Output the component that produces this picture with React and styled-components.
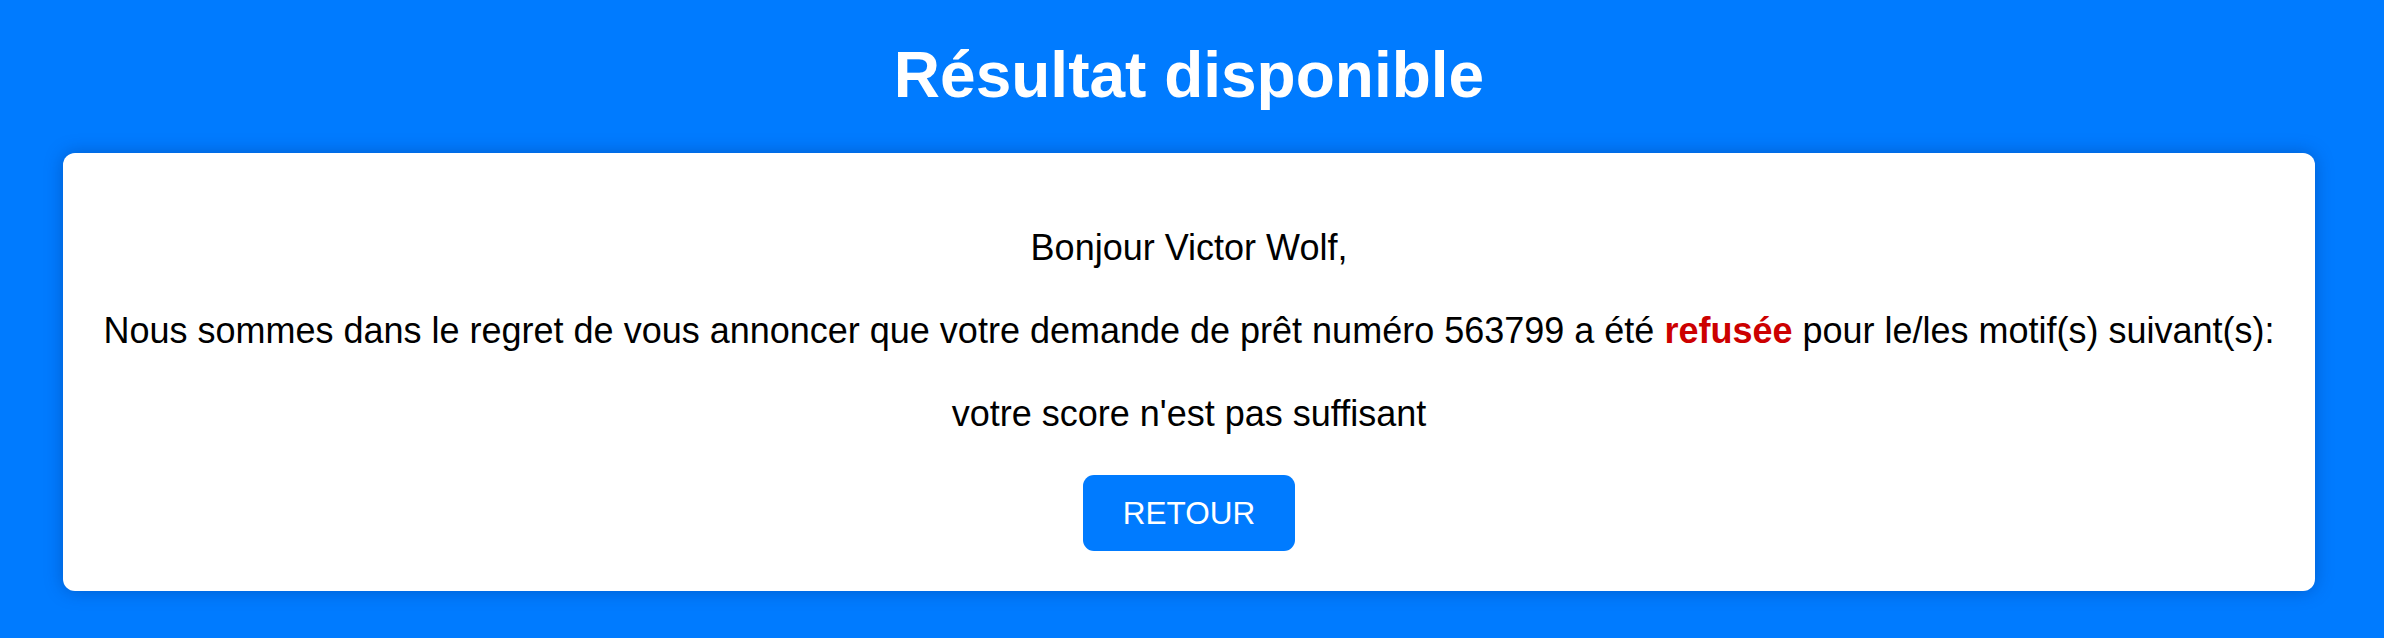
import React from 'react';
import styled, { createGlobalStyle } from 'styled-components';

const GlobalStyle = createGlobalStyle`
	html, body {
		margin: 0;
		padding: 0;
		background: #007bff;
		font-family: 'Liberation Sans', Arial, Helvetica, sans-serif;
	}
	body {
		min-height: 638px;
	}
`;

const Page = styled.div`
	box-sizing: border-box;
	padding: 38px 69px 40px 63px;
	display: flex;
	flex-direction: column;
	align-items: stretch;
`;

const Title = styled.h1`
	margin: 0 0 41px;
	text-align: center;
	color: #ffffff;
	font-size: 64px;
	font-weight: bold;
	line-height: 74px;
`;

const Card = styled.div`
	background: #ffffff;
	border-radius: 12px;
	box-shadow: 0 0 18px rgba(0, 40, 110, 0.35);
	padding: 36px 24px 40px;
	text-align: center;
`;

const Line = styled.p`
	margin: 36px 0;
	font-size: 36px;
	line-height: 1.3;
	color: #000000;
`;

const Refused = styled.strong`
	color: #cc0000;
	font-weight: bold;
`;

const Actions = styled.div`
	display: flex;
	justify-content: center;
	margin-top: 38px;
`;

const BackButton = styled.button`
	display: inline-flex;
	align-items: center;
	justify-content: center;
	height: 76px;
	padding: 0 40px;
	border: none;
	border-radius: 11px;
	background: #007bff;
	color: #ffffff;
	font-family: inherit;
	font-size: 31.5px;
	cursor: pointer;
`;

const App = () => {
	return (
		<>
			<GlobalStyle />
			<Page>
				<Title>Résultat disponible</Title>
				<Card>
					<Line>Bonjour Victor Wolf,</Line>
					<Line>
						Nous sommes dans le regret de vous annoncer que votre demande de prêt numéro 563799 a été{' '}
						<Refused>refusée</Refused> pour le/les motif(s) suivant(s):
					</Line>
					<Line>votre score n'est pas suffisant</Line>
					<Actions>
						<BackButton>RETOUR</BackButton>
					</Actions>
				</Card>
			</Page>
		</>
	);
};

export default App;
